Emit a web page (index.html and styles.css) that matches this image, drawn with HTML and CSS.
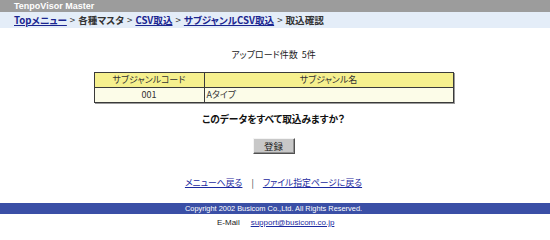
FILE: index.html
```html
<!DOCTYPE html>
<html lang="ja">
<head>
<meta charset="utf-8">
<title>取込確認</title>
<link rel="stylesheet" href="styles.css">
</head>
<body>
<div class="title-bar">TenpoVisor Master</div>
<div class="crumb">
  <a href="#">Topメニュー</a><span class="sep">&gt;</span>各種マスタ<span class="sep">&gt;</span><a href="#">CSV取込</a><span class="sep">&gt;</span><a href="#">サブジャンルCSV取込</a><span class="sep">&gt;</span>取込確認
</div>
<main class="content">
  <p class="count">アップロード件数&nbsp;&nbsp;5件</p>
  <table class="grid">
    <thead>
      <tr><th class="c1">サブジャンルコード</th><th class="c2">サブジャンル名</th></tr>
    </thead>
    <tbody>
      <tr><td class="code">001</td><td class="name">Aタイプ</td></tr>
    </tbody>
  </table>
  <p class="question">このデータをすべて取込みますか？</p>
  <button class="btn" type="button">登録</button>
  <p class="links"><a href="#">メニューへ戻る</a><span class="bar">|</span><a href="#">ファイル指定ページに戻る</a></p>
</main>
<footer class="footer">
  <div class="copy">Copyright 2002 Busicom Co.,Ltd. All Rights Reserved.</div>
  <div class="mail"><span class="mail-label">E-Mail</span><a href="#">support@busicom.co.jp</a></div>
</footer>
</body>
</html>
```
FILE: styles.css
```css
html, body {
  margin: 0;
  padding: 0;
  background: #ffffff;
}
body {
  font-family: "Noto Sans CJK JP", "Liberation Sans", sans-serif;
  font-size: 11px;
  color: #222;
  font-feature-settings: "palt";
}
a {
  color: #1c2aa0;
  text-decoration: underline;
}
.title-bar {
  height: 12px;
  line-height: 12px;
  background: #9c9c9c;
  color: #ffffff;
  font-family: "Liberation Sans", sans-serif;
  font-weight: bold;
  font-size: 9px;
  padding-left: 14px;
}
.crumb {
  height: 16px;
  line-height: 16px;
  background: #e4edf8;
  padding-left: 14px;
  font-weight: bold;
  font-size: 9.6px;
  color: #333;
  white-space: nowrap;
}
.crumb a {
  color: #1a2590;
}
.crumb .sep {
  margin: 0 3px;
  font-weight: normal;
}
.content {
  display: flex;
  flex-direction: column;
  align-items: center;
  padding-right: 3px;
}
.count {
  margin: 21px 0 0;
  height: 12px;
  line-height: 12px;
  font-size: 9px;
}
.grid {
  margin-top: 11px;
  width: 360px;
  border-collapse: collapse;
  border: 1px solid #3a3a3a;
  box-shadow: 1px 1px 0 #9a9a9a;
  font-size: 9px;
}
.grid th, .grid td {
  border: 1px solid #3a3a3a;
  height: 14px;
  padding: 0 4px;
  line-height: 14px;
  font-weight: normal;
  color: #333;
}
.grid th {
  background: #f6f08e;
  text-align: center;
}
.grid .c1 { width: 101px; }
.grid td {
  background: #fcfce8;
}
.grid .code { text-align: center; }
.grid .name { text-align: left; padding-left: 2px; }
.question {
  margin: 10px 0 0;
  height: 12px;
  line-height: 12px;
  font-weight: bold;
  font-size: 9.7px;
  color: #111;
}
.btn {
  margin-top: 13px;
  width: 42px;
  height: 16px;
  padding: 0;
  background: #c8c8c8;
  border: 1px solid;
  border-color: #f4f4f4 #505050 #505050 #f4f4f4;
  box-shadow: inset -1px -1px 0 #909090;
  font-family: "Noto Sans CJK JP", sans-serif;
  font-size: 9.5px;
  line-height: 13px;
  color: #222;
}
.links {
  margin: 23px 0 0;
  height: 12px;
  line-height: 12px;
  font-size: 8.8px;
}
.links .bar {
  margin: 0 9px;
  color: #333;
}
.footer {
  margin-top: 14px;
}
.copy {
  height: 11px;
  line-height: 11px;
  background: #3a4fa6;
  color: #ffffff;
  font-family: "Liberation Sans", sans-serif;
  font-size: 7.4px;
  padding-left: 185px;
}
.mail {
  display: flex;
  gap: 11px;
  margin-top: 3px;
  padding-left: 217px;
  height: 12px;
  line-height: 12px;
  font-family: "Liberation Sans", sans-serif;
  font-size: 8px;
}
.mail-label { color: #222; }
```
